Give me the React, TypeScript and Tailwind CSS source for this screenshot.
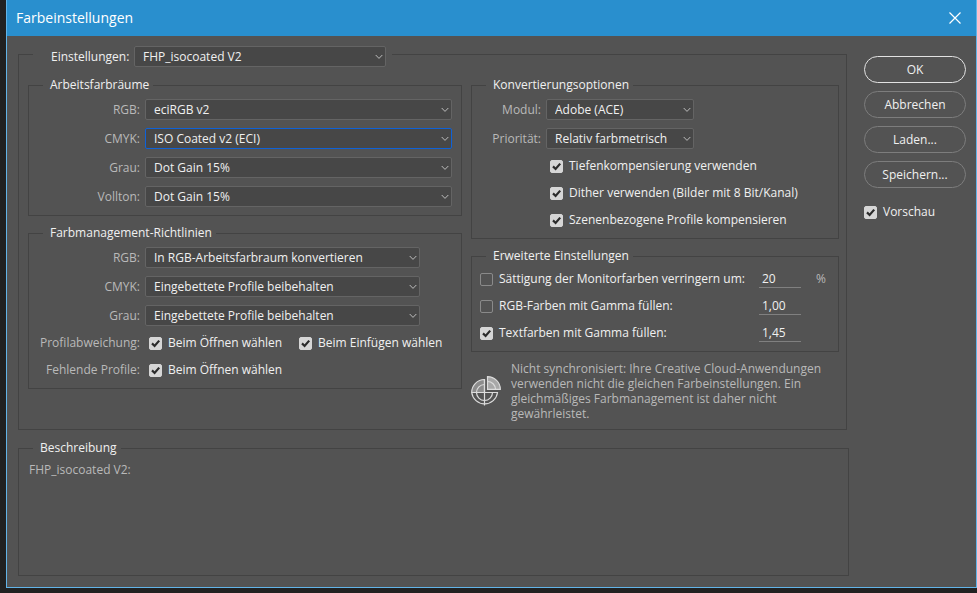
import type { ReactNode } from "react";

function Chevron() {
  return (
    <svg className="pointer-events-none absolute top-2 right-[3px] h-[6px] w-[8px]" viewBox="0 0 8 6" fill="none" stroke="#bdbdbd">
      <path d="M0.7 1 L4 4.4 L7.3 1" />
    </svg>
  );
}

type SelectBoxProps = { id: string; value: string; className: string; focused?: boolean };

function SelectBox({ id, value, className, focused }: SelectBoxProps) {
  return (
    <span className={`relative flex h-[21px] ${className}`}>
      <select
        id={id}
        defaultValue={value}
        className={`w-full appearance-none rounded-[2px] border bg-[#474747] pr-4 pl-2 text-[#f0f0f0] outline-none ${
          focused ? "border-[#0f62d8]" : "border-[#646464]"
        }`}
      >
        <option>{value}</option>
      </select>
      <Chevron />
    </span>
  );
}

function CheckBox({ label, checked = false }: { label: string; checked?: boolean }) {
  return (
    <label className="flex h-[18px] items-center gap-[6px] whitespace-nowrap text-[#f0f0f0]">
      <span className="relative flex size-[13px]">
        <input
          type="checkbox"
          defaultChecked={checked}
          className="peer size-[13px] appearance-none rounded-[2px] border border-[#8a8a8a] checked:border-[#d6d6d6] checked:bg-[#d6d6d6]"
        />
        <svg className="pointer-events-none absolute inset-0 hidden size-[13px] peer-checked:block" viewBox="0 0 13 13" fill="none" stroke="#2b2b2b" strokeWidth="2.2">
          <path d="M3 6.4 L5.6 9 L10.2 3.6" />
        </svg>
      </span>
      {label}
    </label>
  );
}

function Group({ title, className = "", children }: { title: string; className?: string; children: ReactNode }) {
  return (
    <fieldset className={`min-w-0 border border-[#434343] ${className}`}>
      <legend className="ml-[14px] h-4 pr-1 pl-[7px] leading-4 text-[#f0f0f0]">{title}</legend>
      {children}
    </fieldset>
  );
}

function Row({ label, id, labelWidth, children }: { label: string; id?: string; labelWidth: string; children: ReactNode }) {
  return (
    <div className="flex items-center gap-[5px]">
      <label htmlFor={id} className={`shrink-0 text-right whitespace-nowrap ${labelWidth}`}>
        {label}
      </label>
      {children}
    </div>
  );
}

function AmountRow({ label, checked, value, unit }: { label: string; checked?: boolean; value: string; unit?: string }) {
  return (
    <div className="flex h-[18px] items-center pr-3">
      <CheckBox label={label} checked={checked} />
      <input
        aria-label={label}
        defaultValue={value}
        className="ml-auto h-[18px] w-[42px] border-b border-[#808080] bg-transparent pl-[3px] text-[#f0f0f0] outline-none"
      />
      <span className="w-[25px] text-right">{unit}</span>
    </div>
  );
}

function SyncIcon() {
  return (
    <svg className="size-[30px] shrink-0" viewBox="0 0 30 30" fill="none" stroke="#dcdcdc" strokeWidth="1.2">
      <path d="M13.5 3.5 A13 13 0 0 0 0.7 16.5 H13.5 Z" fill="#8c8c8c" />
      <path d="M0.7 16.5 A13 13 0 0 0 26.5 16.5 H13.5 V3.5" />
      <path d="M13.5 16.5 V29.5" />
      <path d="M13.5 8.5 A8 8 0 1 0 21.5 16.5" />
      <path d="M16.5 0.7 V13.3 H29.3 A12.8 12.6 0 0 0 16.5 0.7 Z" fill="#a8a8a8" />
      <path d="M16.5 5.5 A8 8 0 0 1 24.5 13.3" />
    </svg>
  );
}

const buttonClass = "h-[27px] rounded-full border text-[#f0f0f0]";

export default function App() {
  return (
    <div className="flex min-h-screen flex-col bg-[#212121] pb-[5px] pl-[6px] font-['Open_Sans','Noto_Sans',sans-serif] text-[12px] leading-4 text-[#b9b9b9]">
      <div className="flex flex-1 flex-col border-x border-b border-[#62b4e8] bg-[#535353]">
        <header className="flex h-9 items-center justify-between bg-[#298fce] pr-[15px] pl-[9px]">
          <h1 className="text-[14px] text-white">Farbeinstellungen</h1>
          <button aria-label="Schließen" className="flex">
            <svg className="size-3" viewBox="0 0 12 12" fill="none" stroke="#ffffff" strokeWidth="1.2">
              <path d="M0.5 0.5 L11.5 11.5 M11.5 0.5 L0.5 11.5" />
            </svg>
          </button>
        </header>

        <div className="flex flex-1 gap-[15px] pt-[6px] pr-[10px] pb-[11px] pl-[11px]">
          <main className="flex min-w-0 flex-1 flex-col gap-[10px]">
            <fieldset className="mr-[2px] min-w-0 border border-[#434343] pr-[7px] pb-2 pl-[9px]">
              <legend className="ml-[5px] flex items-center gap-1 pt-1 pr-[6px] pl-[18px]">
                <label htmlFor="preset" className="w-[79px] text-[#f0f0f0]">Einstellungen:</label>
                <SelectBox id="preset" value="FHP_isocoated V2" className="w-[252px]" />
              </legend>
              <div className="flex gap-[9px] pt-[10px]">
                <div className="flex min-w-0 grow-[434] basis-0 flex-col gap-[9px]">
                  <Group title="Arbeitsfarbräume">
                    <div className="flex flex-col gap-2 pt-[6px] pr-[9px] pb-2">
                      <Row label="RGB:" id="ws-rgb" labelWidth="w-[111px]">
                        <SelectBox id="ws-rgb" value="eciRGB v2" className="flex-1" />
                      </Row>
                      <Row label="CMYK:" id="ws-cmyk" labelWidth="w-[111px]">
                        <SelectBox id="ws-cmyk" value="ISO Coated v2 (ECI)" className="flex-1" focused />
                      </Row>
                      <Row label="Grau:" id="ws-gray" labelWidth="w-[111px]">
                        <SelectBox id="ws-gray" value="Dot Gain 15%" className="flex-1" />
                      </Row>
                      <Row label="Vollton:" id="ws-spot" labelWidth="w-[111px]">
                        <SelectBox id="ws-spot" value="Dot Gain 15%" className="flex-1" />
                      </Row>
                    </div>
                  </Group>
                  <Group title="Farbmanagement-Richtlinien">
                    <div className="flex flex-col gap-2 pt-[6px] pb-[9px]">
                      <Row label="RGB:" id="pol-rgb" labelWidth="w-[111px]">
                        <SelectBox id="pol-rgb" value="In RGB-Arbeitsfarbraum konvertieren" className="w-[275px]" />
                      </Row>
                      <Row label="CMYK:" id="pol-cmyk" labelWidth="w-[111px]">
                        <SelectBox id="pol-cmyk" value="Eingebettete Profile beibehalten" className="w-[275px]" />
                      </Row>
                      <Row label="Grau:" id="pol-gray" labelWidth="w-[111px]">
                        <SelectBox id="pol-gray" value="Eingebettete Profile beibehalten" className="w-[275px]" />
                      </Row>
                      <div className="flex flex-col gap-[9px]">
                        <Row label="Profilabweichung:" labelWidth="w-[111px]">
                          <div className="flex pl-1">
                            <div className="w-[150px]">
                              <CheckBox label="Beim Öffnen wählen" checked />
                            </div>
                            <CheckBox label="Beim Einfügen wählen" checked />
                          </div>
                        </Row>
                        <Row label="Fehlende Profile:" labelWidth="w-[111px]">
                          <div className="pl-1">
                            <CheckBox label="Beim Öffnen wählen" checked />
                          </div>
                        </Row>
                      </div>
                    </div>
                  </Group>
                </div>

                <div className="flex min-w-0 grow-[368] basis-0 flex-col gap-[9px]">
                  <Group title="Konvertierungsoptionen">
                    <div className="flex flex-col gap-2 pt-[6px] pb-[9px]">
                      <Row label="Modul:" id="engine" labelWidth="w-[69px]">
                        <SelectBox id="engine" value="Adobe (ACE)" className="w-[148px]" />
                      </Row>
                      <Row label="Priorität:" id="intent" labelWidth="w-[69px]">
                        <SelectBox id="intent" value="Relativ farbmetrisch" className="w-[148px]" />
                      </Row>
                      <div className="flex flex-col gap-[9px] pl-[78px]">
                        <CheckBox label="Tiefenkompensierung verwenden" checked />
                        <CheckBox label="Dither verwenden (Bilder mit 8 Bit/Kanal)" checked />
                        <CheckBox label="Szenenbezogene Profile kompensieren" checked />
                      </div>
                    </div>
                  </Group>
                  <Group title="Erweiterte Einstellungen">
                    <div className="flex flex-col gap-[9px] pt-[6px] pb-[9px] pl-2">
                      <AmountRow label="Sättigung der Monitorfarben verringern um:" value="20" unit="%" />
                      <AmountRow label="RGB-Farben mit Gamma füllen:" value="1,00" />
                      <AmountRow label="Textfarben mit Gamma füllen:" value="1,45" checked />
                    </div>
                  </Group>
                  <div className="flex items-center gap-[10px]">
                    <SyncIcon />
                    <p className="leading-[15px] whitespace-nowrap">
                      Nicht synchronisiert: Ihre Creative Cloud-Anwendungen
                      <br />
                      verwenden nicht die gleichen Farbeinstellungen. Ein
                      <br />
                      gleichmäßiges Farbmanagement ist daher nicht
                      <br />
                      gewährleistet.
                    </p>
                  </div>
                </div>
              </div>
            </fieldset>

            <Group title="Beschreibung" className="flex-1">
              <p className="px-[10px] pt-[6px]">FHP_isocoated V2:</p>
            </Group>
          </main>

          <aside className="flex w-[102px] shrink-0 flex-col gap-2 pt-[14px]">
            <button className={`${buttonClass} border-[#e2e2e2]`}>OK</button>
            <button className={`${buttonClass} border-[#7d7d7d]`}>Abbrechen</button>
            <button className={`${buttonClass} border-[#7d7d7d]`}>Laden...</button>
            <button className={`${buttonClass} border-[#7d7d7d]`}>Speichern...</button>
            <div className="pt-[7px]">
              <CheckBox label="Vorschau" checked />
            </div>
          </aside>
        </div>
      </div>
    </div>
  );
}
